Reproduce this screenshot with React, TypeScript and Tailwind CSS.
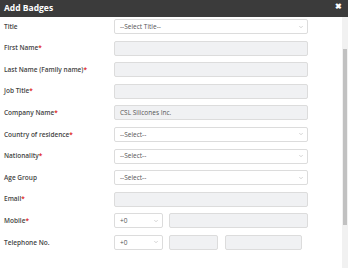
import { ChevronDown } from 'lucide-react';

type Row = { label: string; req?: boolean; kind: 'select' | 'input' | 'phone' | 'tel'; value?: string };

const rows: Row[] = [
  { label: 'Title', kind: 'select', value: '--Select Title--' },
  { label: 'First Name', req: true, kind: 'input' },
  { label: 'Last Name (Family name)', req: true, kind: 'input' },
  { label: 'Job Title', req: true, kind: 'input' },
  { label: 'Company Name', req: true, kind: 'input', value: 'CSL Silicones Inc.' },
  { label: 'Country of residence', req: true, kind: 'select', value: '--Select--' },
  { label: 'Nationality', req: true, kind: 'select', value: '--Select--' },
  { label: 'Age Group', kind: 'select', value: '--Select--' },
  { label: 'Email', req: true, kind: 'input' },
  { label: 'Mobile', req: true, kind: 'phone' },
  { label: 'Telephone No.', kind: 'tel' },
];

function Select({ value, className }: { value: string; className: string }) {
  return (
    <div className={`flex h-full items-center justify-between rounded-[2px] border border-[#dcdcdc] bg-white pl-[5px] pr-[3px] text-[6.5px] text-[#555] ${className}`}>
      <span>{value}</span>
      <ChevronDown className="h-[6px] w-[6px] text-[#aaa]" strokeWidth={2} />
    </div>
  );
}

function Input({ value, className }: { value?: string; className: string }) {
  return (
    <div className={`flex h-full items-center rounded-[2px] border border-[#dcdcdc] bg-[#f0f1f3] px-[5px] text-[6.5px] text-[#555] ${className}`}>
      {value}
    </div>
  );
}

export default function App() {
  return (
    <div className="flex h-[268px] w-[348px] flex-col overflow-hidden bg-white" style={{ fontFamily: '"Open Sans", sans-serif' }}>
      <div className="flex h-[17px] shrink-0 items-center justify-between bg-[#3b3b3b] pl-[4px] pr-[6px]">
        <span className="text-[8.5px] font-bold text-white">Add Badges</span>
        <span className="-mt-[6px] text-[8px] font-bold leading-none text-white">✖</span>
      </div>
      <div className="flex flex-1">
        <div className="flex flex-1 flex-col gap-[6.6px] pt-[2px]">
          {rows.map((r) => (
            <div key={r.label} className="flex h-[15px] items-center">
              <div className="w-[114px] pl-[4px] text-[6.5px] font-semibold text-[#444]">
                {r.label}
                {r.req && <span className="text-[#e02020]">*</span>}
              </div>
              {r.kind === 'select' && <Select value={r.value!} className="w-[194px]" />}
              {r.kind === 'input' && <Input value={r.value} className="w-[194px]" />}
              {r.kind === 'phone' && (
                <div className="flex h-full gap-[6px]">
                  <Select value="+0" className="w-[49px]" />
                  <Input className="w-[139px]" />
                </div>
              )}
              {r.kind === 'tel' && (
                <div className="flex h-full">
                  <Select value="+0" className="w-[49px]" />
                  <Input className="ml-[6px] w-[49px]" />
                  <Input className="ml-[7px] w-[77px]" />
                </div>
              )}
            </div>
          ))}
        </div>
        <div className="flex w-[6px] flex-col bg-[#f1f1f1] pt-[32px] pb-[43px]">
          <div className="mx-[1px] flex-1 bg-[#c1c1c1]" />
        </div>
      </div>
    </div>
  );
}
